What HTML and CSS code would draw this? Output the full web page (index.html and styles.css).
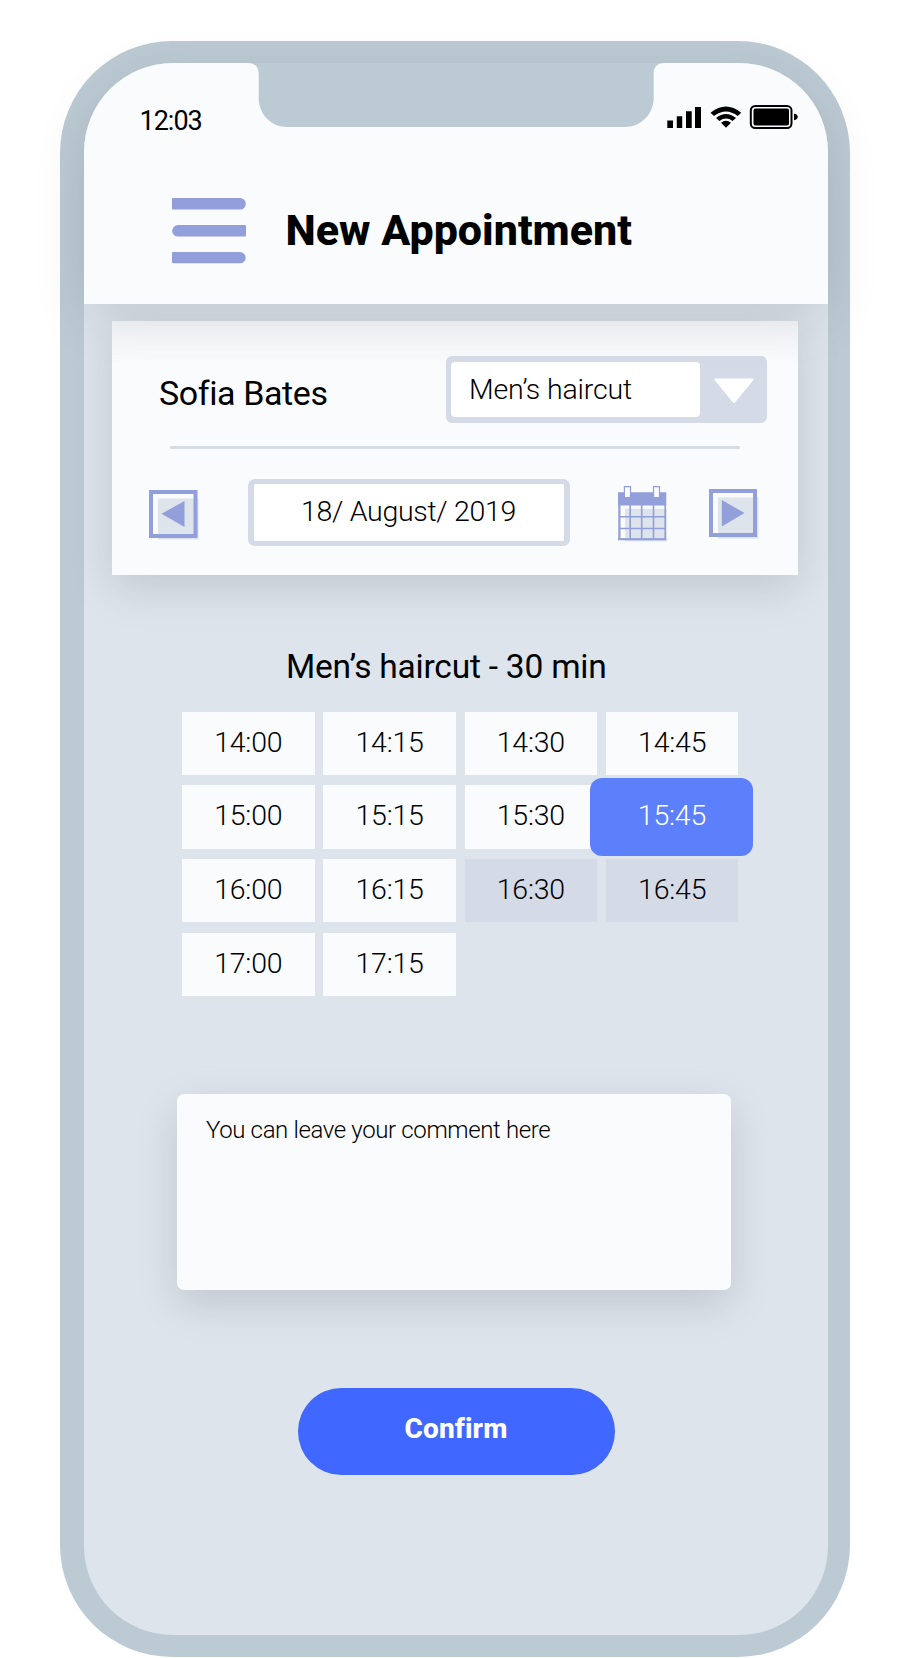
FILE: index.html
```html
<!DOCTYPE html>
<html lang="en">
<head>
<meta charset="utf-8">
<title>New Appointment</title>
<link rel="stylesheet" href="styles.css">
</head>
<body>
<div class="phone">
  <div class="screen">
    <header class="header">
      <svg class="notch" width="416" height="64" viewBox="0 0 416 64"><path d="M0 0C7 0 10.700 4 10.700 11V35C10.700 51 23 64 39 64H377C393 64 405.700 51 405.700 35V11C405.700 4 409 0 416 0Z" fill="#bccad4"/></svg>
      <div class="status">
        <span class="clock">12:03</span>
        <svg class="status-icons" width="132" height="26" viewBox="0 0 132 26">
          <path d="M.3 16.500H6V24H.3ZM9.800 12.300H15.200V24H9.800ZM19 7.300H24.700V24H19ZM28 3H34V24H28Z"/>
          <path d="M43.500 8.800Q59 -3.800 74.200 8.800L70.800 12Q59 2.800 47 12ZM49 13.900Q59 6 69 13.900L65.600 17Q59 12.200 52.400 17ZM54 18.700Q59 15 64 18.700L59 23.800Z"/>
          <rect x="83.800" y="1.900" width="40.700" height="22.200" rx="4.500" fill="none" stroke="#000" stroke-width="2"/>
          <rect x="86.500" y="4.500" width="35.500" height="17" rx="2"/>
          <path d="M127 9.800C132 10 132 16 127 16.200Z"/>
        </svg>
      </div>
      <div class="titlebar">
        <svg class="menu" width="74" height="66" viewBox="0 0 74 66" fill="#929fda">
          <path d="M1 0H68A5.800 5.800 0 0 1 68 11.600H1Q0 11.600 0 10.600V1Q0 0 1 0Z"/>
          <path d="M73 27H6A5.800 5.800 0 0 0 6 38.600H73Q74 38.600 74 37.600V28Q74 27 73 27Z"/>
          <path d="M1 54H68A5.600 5.600 0 0 1 68 65.300H1Q0 65.300 0 64.300V55Q0 54 1 54Z"/>
        </svg>
        <h1 class="title">New Appointment</h1>
      </div>
    </header>
    <section class="card">
      <div class="client-row">
        <span class="client">Sofia Bates</span>
        <div class="select">
          <span class="select-value">Men’s haircut</span>
          <svg class="caret" width="40" height="26" viewBox="0 0 40 26"><path d="M1.500 1.500H38.500L20 24Z" fill="#fff" stroke="#fff" stroke-width="2" stroke-linejoin="round"/></svg>
        </div>
      </div>
      <div class="divider"></div>
      <div class="date-row">
        <svg class="prev" width="50" height="50" viewBox="0 0 50 50"><path d="M9 8.500H49.500V49.500H9Z" fill="#dde4ec"/><path d="M2 2H46.500V46H2Z" fill="none" stroke="#929fda" stroke-width="4"/><path d="M12.500 23.800L35.500 11V37Z" fill="#929fda"/></svg>
        <div class="date">18/ August/ 2019</div>
        <svg class="calendar" width="50" height="56" viewBox="0 0 50 56">
          <path d="M7 22.700H49V55.500H7Z" fill="#dde4ec"/>
          <path d="M1 19H2.500V52H1Z" fill="#929fda"/>
          <path d="M0 6.300H48.300V19.400H0Z" fill="#929fda"/>
          <path d="M1.100 19V53.200H47.200V19M12.200 19V53M23.700 19V53M35.500 19V53M1 30.800H47M1 42.500H47" fill="none" stroke="#929fda" stroke-width="1.600"/>
          <path d="M0 52.200H48.300V54.200H0Z" fill="#929fda"/>
          <path d="M6.400 .7H12.500V11.500H6.400ZM35.500 .7H41.500V11.500H35.500Z" fill="#f9fbfd" stroke="#929fda" stroke-width="1.200"/>
        </svg>
        <svg class="next" width="50" height="50" viewBox="0 0 50 50"><path d="M9 8.500H49.500V49.500H9Z" fill="#dde4ec"/><path d="M2 2H46V46H2Z" fill="none" stroke="#929fda" stroke-width="4"/><path d="M12.800 11L35.500 24L12.800 37.500Z" fill="#929fda"/></svg>
      </div>
    </section>
    <h2 class="service">Men’s haircut - 30 min</h2>
    <div class="slots">
      <span class="slot">14:00</span><span class="slot">14:15</span><span class="slot">14:30</span><span class="slot">14:45</span>
      <span class="slot">15:00</span><span class="slot">15:15</span><span class="slot">15:30</span><span class="slot selected">15:45</span>
      <span class="slot">16:00</span><span class="slot">16:15</span><span class="slot taken">16:30</span><span class="slot taken">16:45</span>
      <span class="slot">17:00</span><span class="slot">17:15</span>
    </div>
    <div class="comment">You can leave your comment here</div>
    <button class="confirm">Confirm</button>
  </div>
</div>
</body>
</html>
```
FILE: styles.css
```css
* { box-sizing: border-box; }
body {
  display: flow-root;
  margin: 0;
  background: #fff;
  color: #000;
  font-family: Roboto, sans-serif;
  height: 1658px;
  overflow: hidden;
}
svg { display: block; flex: none; }
h1, h2 { margin: 0; white-space: nowrap; }
.phone {
  width: 790px;
  height: 1616px;
  margin: 41px 0 0 60px;
  padding: 22px 22.5px 22px 23.5px;
  border-radius: 112px;
  background: #bccad4;
}
.screen {
  display: flex;
  flex-direction: column;
  height: 1572px;
  border-radius: 89px;
  background: #dde4ec;
}
.header {
  position: relative;
  height: 240.5px;
  flex: none;
  border-radius: 89px 89px 0 0;
  background: #f9fbfd;
  box-shadow: 0 14px 54px rgba(0, 0, 0, .11);
}
.notch { position: absolute; left: 164px; top: 0; }
.status {
  display: flex;
  justify-content: space-between;
  padding: 41px 29px 0 56px;
  height: 135px;
}
.clock { font-size: 27px; line-height: 34px; letter-spacing: -1px; }
.titlebar { display: flex; padding-left: 88px; }
.title {
  margin: 1.5px 0 0 40px;
  font-size: 43px;
  line-height: 60px;
  font-weight: 800;
}
.card {
  flex: none;
  width: 686px;
  height: 254.5px;
  margin: 17px 0 0 28px;
  background: linear-gradient(#f5f6f8, #f9fbfd 42px);
  box-shadow: 0 12px 42px rgba(0, 0, 0, .13);
}
.client-row {
  display: flex;
  justify-content: space-between;
  padding: 35px 30.5px 0 47.5px;
}
.client { font-size: 34px; line-height: 40px; margin-top: 17.5px; letter-spacing: -.4px; }
.select {
  display: flex;
  align-items: center;
  width: 321px;
  height: 67.5px;
  padding-left: 5px;
  border-radius: 6px;
  background: #d4dae6;
}
.select-value {
  width: 249px;
  height: 55px;
  padding-left: 18px;
  border-radius: 4px;
  background: #fff;
  font-size: 28.500px;
  line-height: 55px;
  font-weight: 300;
  letter-spacing: -.15px;
}
.caret { margin: 4px 0 0 14px; }
.divider {
  width: 570px;
  height: 3px;
  margin: 23px 0 0 58px;
  border-radius: 2px;
  background: #d5dce6;
}
.date-row { display: flex; padding: 30px 0 0 37px; }
.prev { margin-top: 11px; }
.date {
  width: 322px;
  height: 67px;
  margin-left: 49px;
  border: solid #d4dae6;
  border-width: 5px 6.5px 5px 6px;
  border-radius: 7px;
  background: #fff;
  font-size: 28.500px;
  line-height: 55px;
  font-weight: 300;
  letter-spacing: -.3px;
  text-align: center;
}
.calendar { margin: 7px 0 0 48px; }
.next { margin: 10px 0 0 41px; }
.service {
  margin: 71px 0 0 202.5px;
  font-size: 33.500px;
  line-height: 42px;
  font-weight: 400;
  letter-spacing: -.22px;
}
.slots {
  display: grid;
  grid-template-columns: repeat(4, 132.5px);
  grid-auto-rows: 63.5px;
  gap: 10.2px 8.8px;
  margin: 23.5px 0 0 98.5px;
}
.slot {
  position: relative;
  background: #f9fbfd;
  text-align: center;
  font-size: 28.500px;
  line-height: 61px;
  font-weight: 300;
  letter-spacing: -.2px;
}
.taken { background: #d4dae6; }
.selected {
  width: 163px;
  height: 78.5px;
  margin: -7.5px 0 0 -15.5px;
  line-height: 76px;
  border-radius: 12px;
  background: rgba(88, 123, 252, .97);
  color: #fff;
}
.comment {
  flex: none;
  width: 554px;
  height: 195.5px;
  margin: 98px 0 0 93.5px;
  padding: 21px 29px;
  border-radius: 7px;
  background: #f9fbfd;
  box-shadow: 0 14px 42px rgba(0, 0, 0, .13);
  font-size: 24px;
  line-height: 30px;
  font-weight: 300;
  letter-spacing: -.37px;
}
.confirm {
  width: 317px;
  height: 87px;
  margin: 98px 0 0 214px;
  padding: 0 0 4px;
  border: 0;
  border-radius: 43.5px;
  background: #4067ff;
  color: #fff;
  font: 800 28px/34px Roboto, sans-serif;
  letter-spacing: .1px;
}
```
